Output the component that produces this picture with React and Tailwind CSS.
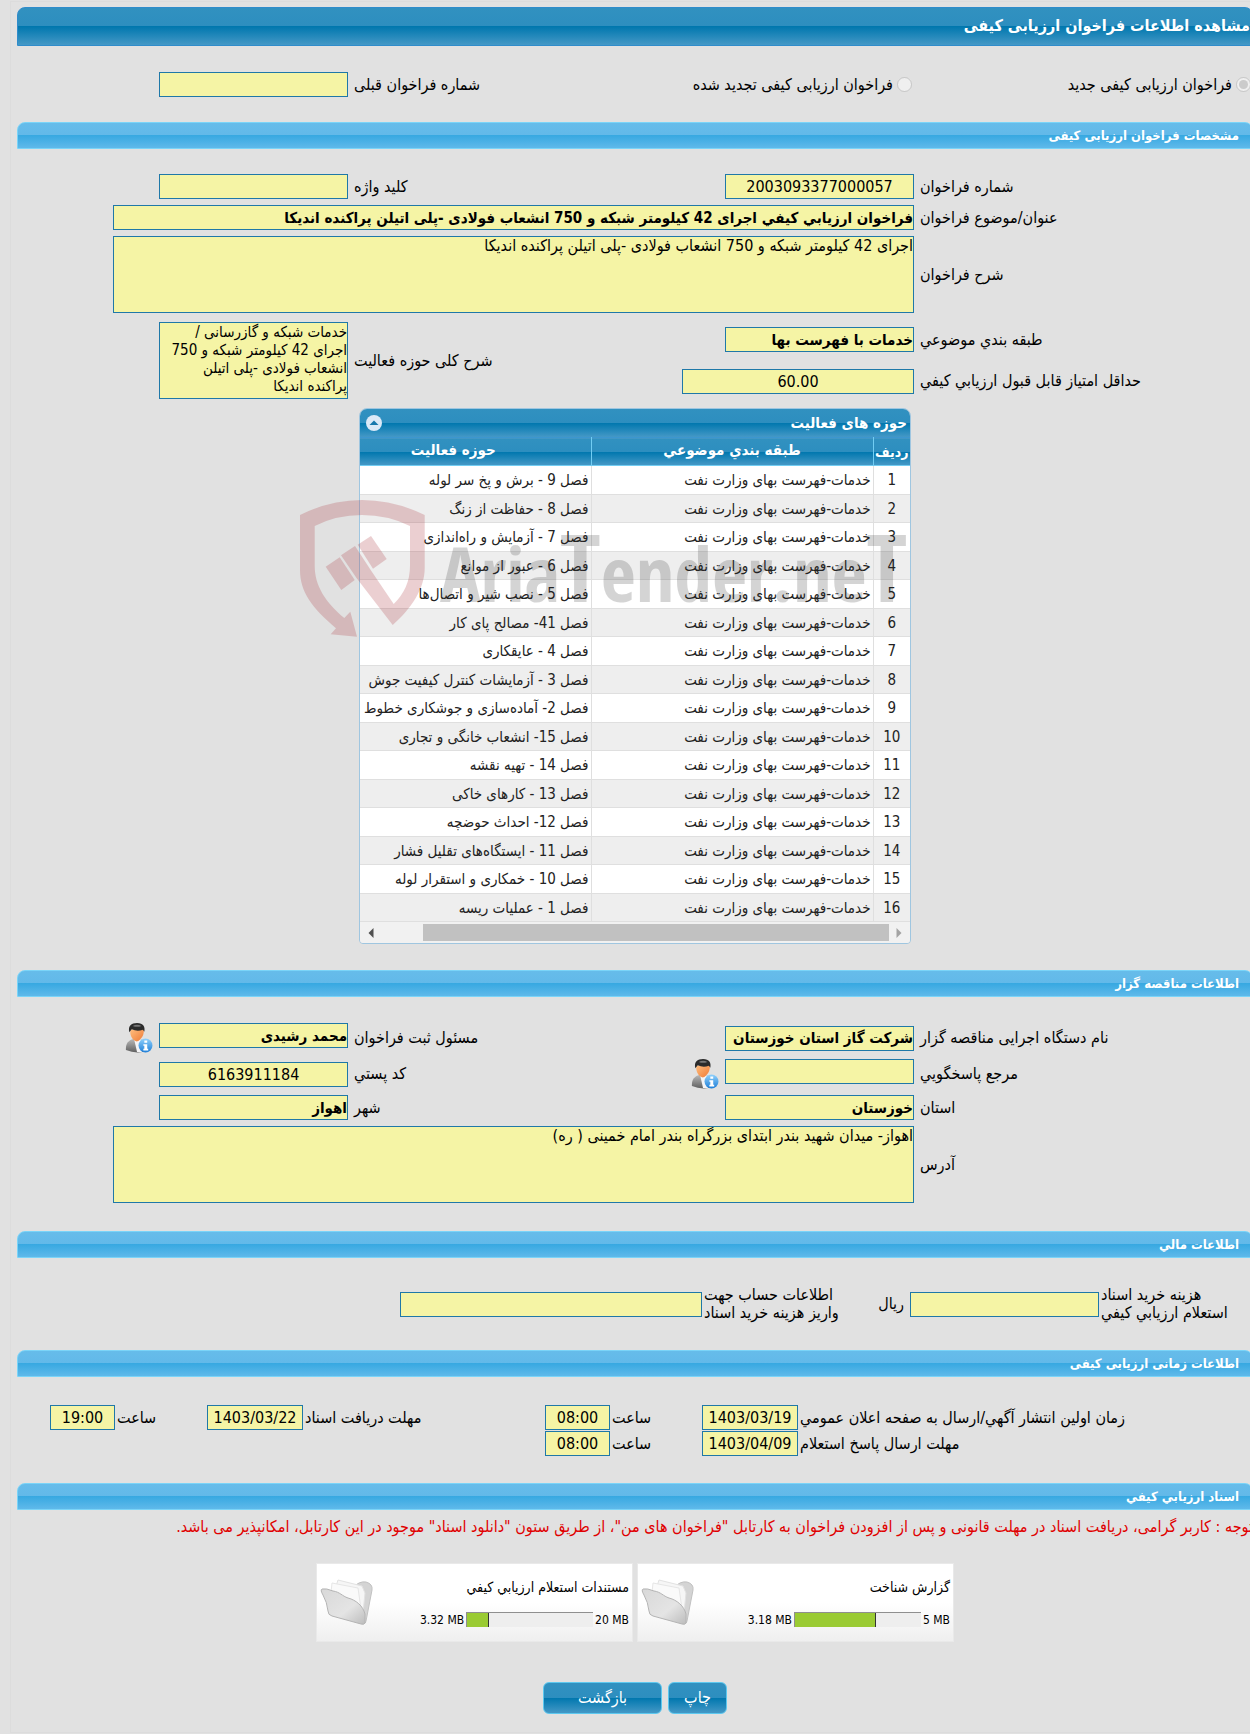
import React from "react";
import clsx from "clsx";

const activityRows = [
  "فصل 9 - برش و پخ سر لوله",
  "فصل 8 - حفاظت از زنگ",
  "فصل 7 - آزمایش و راه‌اندازی",
  "فصل 6 - عبور از موانع",
  "فصل 5 - نصب شیر و اتصال‌ها",
  "فصل 41- مصالح پای کار",
  "فصل 4 - عایقکاری",
  "فصل 3 - آزمایشات کنترل کیفیت جوش",
  "فصل 2- آماده‌سازی و جوشکاری خطوط لوله",
  "فصل 15- انشعاب خانگی و تجاری",
  "فصل 14 - تهیه نقشه",
  "فصل 13 - کارهای خاکی",
  "فصل 12- احداث حوضچه",
  "فصل 11 - ایستگاه‌های تقلیل فشار",
  "فصل 10 - خمکاری و استقرار لوله",
  "فصل 1 - عملیات ریسه",
];

const darkGradient =
  "bg-[linear-gradient(to_bottom,#3191c0_0%,#2d8ebf_50%,#0077ae_50%,#4498c6_100%)]";
const lightGradient =
  "bg-[linear-gradient(to_bottom,#66bcea_0%,#62b9e9_48%,#36a8e1_48%,#5fb9ea_100%)]";
const fieldBase =
  "block border border-[#1f78a8] bg-[#f5f4a5] text-black outline-none";
const formGrid =
  "grid grid-cols-[333fr_232fr_322fr_235fr_90fr] items-center gap-x-1.5 gap-y-1.5";

const SectionBar = ({ children }) => (
  <h2
    className={clsx(
      "h-[27px] rounded-t-lg border border-[#7ad4f8] pr-[13px] text-[13px] leading-[26px] font-bold text-white",
      lightGradient
    )}
  >
    {children}
  </h2>
);

const Label = ({ htmlFor, children }) => (
  <label htmlFor={htmlFor} className="text-left leading-[18px] whitespace-nowrap">
    {children}
  </label>
);

// Text values are heavy and sit at the right edge, numbers are centred
const Field = ({ id, value = "", numeric, className = "w-[189px]" }) => (
  <input
    id={id}
    type="text"
    readOnly
    defaultValue={value}
    className={clsx(
      fieldBase,
      "h-[25px]",
      numeric ? "text-center" : "text-[15px] font-bold",
      className
    )}
  />
);

const TextArea = ({ id, value, className }) => (
  <textarea
    id={id}
    readOnly
    defaultValue={value}
    className={clsx(fieldBase, "h-[77px] resize-none overflow-hidden leading-[18px]", className)}
  />
);

const PersonIcon = () => (
  <svg width="28" height="30" viewBox="0 0 28 31">
    <defs>
      <linearGradient id="suit" x1="0" y1="0" x2="0" y2="1">
        <stop offset="0" stopColor="#b9b9b9" />
        <stop offset="1" stopColor="#5f5f5f" />
      </linearGradient>
      <linearGradient id="face" x1="0" y1="0" x2="1" y2="1">
        <stop offset="0" stopColor="#ffbf80" />
        <stop offset="1" stopColor="#ef7a35" />
      </linearGradient>
      <linearGradient id="info" x1="0" y1="0" x2="0" y2="1">
        <stop offset="0" stopColor="#8fd0fb" />
        <stop offset="1" stopColor="#1f7fd8" />
      </linearGradient>
    </defs>
    <path d="M0.500 28C0 21 3 18 8 16.500L15 16.500C20 18 23 21 22 29Q11 32.500 0.500 28Z" fill="url(#suit)" />
    <path d="M9 17L12 30L17 30L16 17Z" fill="#f4f4f6" />
    <path d="M5 7Q4.500 13 7.500 16.500Q12 21.500 15.500 16.500Q19.500 13 19 6Z" fill="url(#face)" />
    <path d="M4 9.500C2.500 3 6 0 12 0C18.500 0 20.500 4 19.500 9L18 7Q12 9 6.500 6.500Z" fill="#2b2b2b" />
    <path d="M7.500 3Q12 0.500 16.500 3Q12 5 7.500 3Z" fill="#777777" />
    <circle cx="20.700" cy="23.300" r="7.200" fill="url(#info)" />
    <path d="M19.500 18H22.500V20.500H19.500ZM18.500 22H22.500V26.500H23.500V28.500H18.500V26.500H19.500V23.500H18.500Z" fill="#ffffff" />
  </svg>
);

const FolderIcon = () => (
  <svg width="54" height="48" viewBox="0 0 54 48">
    <defs>
      <linearGradient id="folderFront" x1="0" y1="0" x2="1" y2="1">
        <stop offset="0" stopColor="#d8d8d8" />
        <stop offset="0.600" stopColor="#e4e4e4" />
        <stop offset="1" stopColor="#bcbcbc" />
      </linearGradient>
    </defs>
    <path d="M34 8Q39 2 46 3Q53 5 52 11L46 42Q46 45 43 44Z" fill="#d4d4d4" stroke="#c2c2c2" />
    <path d="M18 1L42 7L45 14L43 34L10 26Z" fill="#f6f6f6" stroke="#e2e2e2" />
    <path d="M12 4L38 9L41 30L10 24Z" fill="#fafafa" stroke="#e6e6e6" />
    <path d="M2 10Q6 9 13 12C20 13 22 17 28 19C36 21 43 27 45 35L45 44Q44 46 41 45L12 37Q8 36 8 32Q7 23 3 16Q0 11 2 10Z" fill="url(#folderFront)" stroke="#b4b4b4" />
  </svg>
);

const Watermark = () => (
  <svg
    className="pointer-events-none absolute top-[92px] -left-[59px]"
    width="610"
    height="140"
    viewBox="0 0 610 140"
    direction="ltr"
  >
    <g fill="#a92932" opacity="0.22">
      <path
        fillRule="evenodd"
        d="M0 15Q30 0 62 0Q94 0 124.700 15V68C124.700 88 112 108 92.700 125L56.700 78.300L41 55.300L55 46L71 70.500L93.700 104Q110 88 110 66V26Q88 15 62 15Q36 15 14.700 26V66C14.700 86 26 103 44.300 118L50.300 111.700L57 136.700L30.700 134.300L36 128.300C12 108 0 92 0 70Z"
      />
      <path d="M39.700 57.300L54.700 80L41.300 90L25.700 66.700Z" />
      <path d="M57.700 44.700L71 36L86.700 59L73 68.700Z" />
    </g>
    <text
      x="140"
      y="102"
      fontSize="76"
      fontWeight="700"
      fill="#303030"
      opacity="0.2"
      style={{ fontFamily: "'Open Sans Condensed', 'Roboto Condensed', sans-serif" }}
    >
      Aria<tspan fontSize="94">T</tspan>ender.ne<tspan fontSize="94">T</tspan>
    </text>
  </svg>
);

const ActivityTable = () => (
  <div className="relative mx-auto mt-[9px] w-[552px]">
    <div className="overflow-hidden rounded-t-lg rounded-b-sm border border-[#9fc6e0]">
      <div className={clsx("flex h-7 items-center justify-between pr-[3px] pl-1.5", darkGradient)}>
        <h3 className="text-[15px] leading-7 font-bold text-white">حوزه های فعالیت</h3>
        <button
          type="button"
          aria-label="بستن"
          className="flex size-4 items-center justify-center rounded-full bg-[#dbe9f7]"
        >
          <svg width="10" height="6" viewBox="0 0 10 6">
            <path d="M0.500 5L5 0.500L9.500 5Z" fill="#1778ad" />
          </svg>
        </button>
      </div>
      <table className="w-full table-fixed border-collapse">
        <thead>
          <tr
            className={clsx(
              "h-7 border-t border-b border-t-[#3c96cf] border-b-[#72cdf3] text-[15px] leading-5 font-bold text-white",
              darkGradient
            )}
          >
            <th className="w-[37px] text-[14px]">ردیف</th>
            <th className="w-[282px] border-r border-[#72cdf3] pb-1">طبقه بندي موضوعي</th>
            <th className="border-r border-[#72cdf3] pr-11 pb-1">حوزه فعالیت</th>
          </tr>
        </thead>
        <tbody className="text-[15px] leading-5 whitespace-nowrap text-[#222222]">
          {activityRows.map((title, i) => (
            <tr
              key={title}
              className={clsx(
                "border-b border-[#dfdfdf]",
                i % 2 ? "h-7 bg-[#eeeeee]" : "h-[29px] bg-white"
              )}
            >
              <td className="text-center">{i + 1}</td>
              <td className="border-r border-[#dfdfdf] pr-0.5">خدمات-فهرست بهای وزارت نفت</td>
              <td className="overflow-hidden border-r border-[#dfdfdf] pr-0.5">{title}</td>
            </tr>
          ))}
        </tbody>
      </table>
      <div className="flex h-[21px] items-center bg-[#f1f1f1] pr-2 pl-2">
        <svg width="6" height="12" viewBox="0 0 6 12">
          <path d="M0.500 1L5.500 6L0.500 11Z" fill="#a3a3a3" />
        </svg>
        <span className="mr-[7px] ml-auto h-[17px] w-[466px] bg-[#c1c1c1]" />
        <svg width="6" height="12" viewBox="0 0 6 12">
          <path d="M5.500 1L0.500 6L5.500 11Z" fill="#505050" />
        </svg>
      </div>
    </div>
    <Watermark />
  </div>
);

const DocumentCard = ({ title, used, total, percent }) => (
  <div className="flex h-[79px] w-[317px] items-center justify-between border border-[#e9e9e9] bg-[linear-gradient(to_bottom,#ffffff_50%,#efefef)] pr-[3px] pl-[3px] text-[14px]">
    <div>
      <p className="leading-[18px]">{title}</p>
      <div className="mt-4 flex items-center justify-end gap-0.5 text-[12px] leading-4" dir="ltr">
        <span className="w-12 text-right whitespace-nowrap">{used}</span>
        <div className="h-[15px] w-[127px] border-t border-l border-[#8f8f8f] bg-[#eeeeee]">
          <div
            className="h-full border-r border-[#333333] bg-[#9acb33]"
            style={{ width: `${percent}%` }}
          />
        </div>
        <span className="whitespace-nowrap">{total}</span>
      </div>
    </div>
    <FolderIcon />
  </div>
);

const ActionButton = ({ className, children }) => (
  <button
    type="button"
    className={clsx(
      "h-8 rounded-md border border-[#5cc8ef] text-[16px] text-white",
      darkGradient,
      className
    )}
  >
    {children}
  </button>
);

const App = () => {
  return (
    <div dir="rtl" className="overflow-x-hidden bg-[#e1e1e1] pt-px pb-px">
      <main className="-mr-[3px] ml-2.5 border-t border-b border-l border-[#dcdcdc] pt-[5px] pb-[18px] pl-1.5 font-['DejaVu_Sans_Condensed','DejaVu_Sans',sans-serif] text-[16px] leading-[18px] text-black">
        <h1
          className={clsx(
            "h-[39px] rounded-t-lg border border-[#2f8ccb] pr-0.5 text-[16px] leading-[36px] font-bold text-white",
            darkGradient
          )}
        >
          مشاهده اطلاعات فراخوان ارزیابی کیفی
        </h1>

        <div className={clsx(formGrid, "pt-[26px] pb-[25px]")}>
          <label className="flex items-center gap-1 pr-0.5 whitespace-nowrap">
            <input type="radio" name="callType" disabled defaultChecked className="size-[15px]" />
            فراخوان ارزیابی کیفی جدید
          </label>
          <label className="flex items-center gap-1 pr-0.5 whitespace-nowrap">
            <input type="radio" name="callType" disabled className="size-[15px]" />
            فراخوان ارزیابی کیفی تجدید شده
          </label>
          <Label htmlFor="prevNumber">شماره فراخوان قبلی</Label>
          <Field id="prevNumber" />
        </div>

        <SectionBar>مشخصات فراخوان ارزیابی کیفی</SectionBar>
        <div className="pt-[25px] pb-[26px]">
          <div className={formGrid}>
            <Label htmlFor="callNumber">شماره فراخوان</Label>
            <Field id="callNumber" value="2003093377000057" numeric />
            <Label htmlFor="keyword">کلید واژه</Label>
            <Field id="keyword" />
            <span />
            <Label htmlFor="subject">عنوان/موضوع فراخوان</Label>
            <Field
              id="subject"
              value="فراخوان ارزيابي كيفي اجرای 42 کیلومتر شبکه و 750 انشعاب فولادی -پلی اتیلن پراکنده اندیکا"
              className="col-span-3 w-full"
            />
            <span />
            <Label htmlFor="description">شرح فراخوان</Label>
            <TextArea
              id="description"
              value="اجرای 42 کیلومتر شبکه و 750 انشعاب فولادی -پلی اتیلن پراکنده اندیکا"
              className="col-span-3 w-full"
            />
          </div>
          <div className={clsx(formGrid, "mt-[9px]")}>
            <Label htmlFor="category">طبقه بندي موضوعي</Label>
            <Field id="category" value="خدمات با فهرست بها" />
            <label htmlFor="scope" className="row-span-2 text-left">
              شرح کلی حوزه فعالیت
            </label>
            <TextArea
              id="scope"
              value="خدمات شبکه و گازرسانی / اجرای 42 کیلومتر شبکه و 750 انشعاب فولادی -پلی اتیلن پراکنده اندیکا"
              className="row-span-2 w-[189px] text-[15px]"
            />
            <span className="row-span-2" />
            <Label htmlFor="minScore">حداقل امتیاز قابل قبول ارزيابي كيفي</Label>
            <Field id="minScore" value="60.00" numeric className="w-full" />
          </div>
          <ActivityTable />
        </div>

        <SectionBar>اطلاعات مناقصه گزار</SectionBar>
        <div className={clsx(formGrid, "pt-[26px] pb-7")}>
          <Label htmlFor="agency">نام دستگاه اجرایی مناقصه گزار</Label>
          <Field id="agency" value="شرکت گاز استان خوزستان" />
          <Label htmlFor="registrar">مسئول ثبت فراخوان</Label>
          <div className="flex items-start gap-1.5">
            <Field id="registrar" value="محمد رشیدی" />
            <PersonIcon />
          </div>
          <span />
          <Label htmlFor="contact">مرجع پاسخگويي</Label>
          <div className="flex items-start gap-1.5">
            <Field id="contact" />
            <PersonIcon />
          </div>
          <Label htmlFor="postalCode">کد پستي</Label>
          <Field id="postalCode" value="6163911184" numeric />
          <span />
          <Label htmlFor="province">استان</Label>
          <Field id="province" value="خوزستان" />
          <Label htmlFor="city">شهر</Label>
          <Field id="city" value="اهواز" />
          <span />
          <Label htmlFor="address">آدرس</Label>
          <TextArea
            id="address"
            value="اهواز- میدان شهید بندر ابتدای بزرگراه بندر امام خمینی ( ره)"
            className="col-span-3 w-full"
          />
        </div>

        <SectionBar>اطلاعات مالي</SectionBar>
        <div className="grid h-[92px] grid-cols-[152fr_189fr_204fr_302fr_381fr] items-center gap-x-0.5">
          <label htmlFor="fee" className="text-left leading-[18px]">
            هزینه خرید اسناد
            <br />
            استعلام ارزيابي كيفي
          </label>
          <Field id="fee" className="w-full" />
          <div className="flex items-center justify-between pr-1">
            <span>ریال</span>
            <label htmlFor="account" className="text-left leading-[18px]">
              اطلاعات حساب جهت
              <br />
              واریز هزینه خرید اسناد
            </label>
          </div>
          <Field id="account" className="w-full" />
        </div>

        <SectionBar>اطلاعات زمانی ارزیابی کیفی</SectionBar>
        <div className="grid grid-cols-[453fr_96fr_88fr_65fr_238fr_96fr_88fr_65fr_31fr] items-center gap-x-0.5 gap-y-px pt-7 pb-[27px]">
          <Label htmlFor="publishDate">زمان اولین انتشار آگهي/ارسال به صفحه اعلان عمومي</Label>
          <Field id="publishDate" value="1403/03/19" numeric className="w-full" />
          <Label htmlFor="publishHour">ساعت</Label>
          <Field id="publishHour" value="08:00" numeric className="w-full" />
          <Label htmlFor="receiveDate">مهلت دریافت اسناد</Label>
          <Field id="receiveDate" value="1403/03/22" numeric className="w-full" />
          <Label htmlFor="receiveHour">ساعت</Label>
          <Field id="receiveHour" value="19:00" numeric className="w-full" />
          <span />
          <Label htmlFor="replyDate">مهلت ارسال پاسخ استعلام</Label>
          <Field id="replyDate" value="1403/04/09" numeric className="w-full" />
          <Label htmlFor="replyHour">ساعت</Label>
          <Field id="replyHour" value="08:00" numeric className="w-full" />
        </div>

        <SectionBar>اسناد ارزيابي كيفي</SectionBar>
        <p className="pt-2 leading-[18px] whitespace-nowrap text-[#e00000]">
          توجه : کاربر گرامی، دریافت اسناد در مهلت قانونی و پس از افزودن فراخوان به کارتابل "فراخوان
          های من"، از طریق ستون "دانلود اسناد" موجود در این کارتابل، امکانپذیر می باشد.
        </p>
        <div className="mt-[27px] flex justify-center gap-1">
          <DocumentCard title="گزارش شناخت" used="3.18 MB" total="5 MB" percent={64} />
          <DocumentCard title="مستندات استعلام ارزيابي كيفي" used="3.32 MB" total="20 MB" percent={17} />
        </div>
        <div className="mt-10 flex justify-center gap-1.5">
          <ActionButton className="w-[59px]">چاپ</ActionButton>
          <ActionButton className="w-[119px]">بازگشت</ActionButton>
        </div>
      </main>
    </div>
  );
};

export default App;
